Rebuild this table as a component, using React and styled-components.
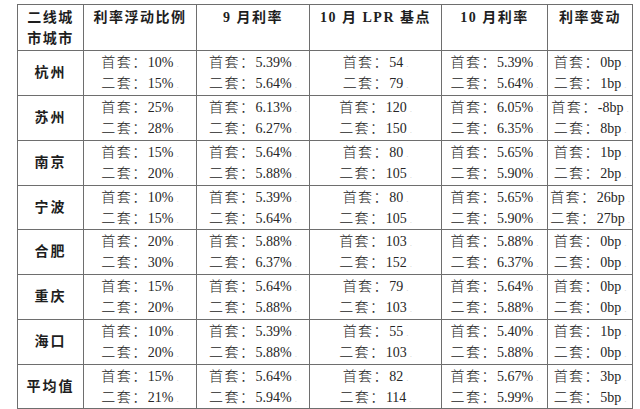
import React from 'react';
import styled, { createGlobalStyle } from 'styled-components';

const GlobalStyle = createGlobalStyle`
  html, body {
    margin: 0;
    padding: 0;
    background: #fff;
  }
`;

const Page = styled.div`
  padding: 4px 0 0 17px;
  width: 640px;
  height: 409px;
  box-sizing: border-box;
  overflow: hidden;
`;

const Table = styled.table`
  border-collapse: collapse;
  table-layout: fixed;
  width: 615px;
  font-family: "Liberation Serif", "Noto Sans CJK SC", serif;
  color: #262626;
`;

const HeadCell = styled.th`
  border: 1px solid #6e6e6e;
  padding: 2px 0 0;
  vertical-align: top;
  text-align: center;
  font-size: 14px;
  font-weight: 700;
  line-height: 21px;
  letter-spacing: 1.5px;
  color: #1e1e1e;
`;

const HeadLine = styled.div`
  height: 21px;
  white-space: nowrap;
`;

const Row = styled.tr`
  height: ${p => p.$h}px;
`;

const CityCell = styled.td`
  border: 1px solid #6e6e6e;
  text-align: center;
  vertical-align: middle;
  font-size: 14px;
  line-height: 20px;
  font-weight: 700;
  letter-spacing: 2px;
  color: #1e1e1e;
  padding: 0;
`;

const DataCell = styled.td`
  border: 1px solid #6e6e6e;
  text-align: center;
  vertical-align: middle;
  font-size: 14px;
  line-height: 20px;
  padding: 0;
`;

const Line = styled.div`
  white-space: nowrap;
  height: 21px;
  line-height: 21px;
`;

const Label = styled.span`
  letter-spacing: 1.5px;
  font-weight: 300;
`;

const Mark = styled.span`
  color: #cfcfcf;
  font-size: 9px;
  line-height: 0;
  margin-left: 3px;
`;

const widths = [66, 113, 113, 132, 106, 85];

const headers = [
  ['二线城', '市城市'],
  ['利率浮动比例'],
  ['9 月利率'],
  ['10 月 LPR 基点'],
  ['10 月利率'],
  ['利率变动'],
];

const rows = [
  ['杭州', ['10%', '15%'], ['5.39%', '5.64%'], ['54', '79'], ['5.39%', '5.64%'], ['0bp', '1bp']],
  ['苏州', ['25%', '28%'], ['6.13%', '6.27%'], ['120', '150'], ['6.05%', '6.35%'], ['-8bp', '8bp']],
  ['南京', ['15%', '20%'], ['5.64%', '5.88%'], ['80', '105'], ['5.65%', '5.90%'], ['1bp', '2bp']],
  ['宁波', ['10%', '15%'], ['5.39%', '5.64%'], ['80', '105'], ['5.65%', '5.90%'], ['26bp', '27bp']],
  ['合肥', ['20%', '30%'], ['5.88%', '6.37%'], ['103', '152'], ['5.88%', '6.37%'], ['0bp', '0bp']],
  ['重庆', ['15%', '20%'], ['5.64%', '5.88%'], ['79', '103'], ['5.64%', '5.88%'], ['0bp', '0bp']],
  ['海口', ['10%', '20%'], ['5.39%', '5.88%'], ['55', '103'], ['5.40%', '5.88%'], ['1bp', '0bp']],
  ['平均值', ['15%', '21%'], ['5.64%', '5.94%'], ['82', '114'], ['5.67%', '5.99%'], ['3bp', '5bp']],
];

function Pair({ values }) {
  return (
    <>
      <Line><Label>首套：</Label>{values[0]}<Mark>.</Mark></Line>
      <Line><Label>二套：</Label>{values[1]}<Mark>.</Mark></Line>
    </>
  );
}

export default function App() {
  return (
    <Page>
      <GlobalStyle />
      <Table>
        <colgroup>
          {widths.map((w, i) => <col key={i} style={{ width: w }} />)}
        </colgroup>
        <thead>
          <Row $h={46}>
            {headers.map((lines, i) => (
              <HeadCell key={i}>
                {lines.map(l => <HeadLine key={l}>{l}</HeadLine>)}
              </HeadCell>
            ))}
          </Row>
        </thead>
        <tbody>
          {rows.map(([city, ...cols], i) => (
            <Row key={city} $h={i % 4 === 3 ? 44 : 45}>
              <CityCell>{city}</CityCell>
              {cols.map((vals, j) => (
                <DataCell key={j}><Pair values={vals} /></DataCell>
              ))}
            </Row>
          ))}
        </tbody>
      </Table>
    </Page>
  );
}
